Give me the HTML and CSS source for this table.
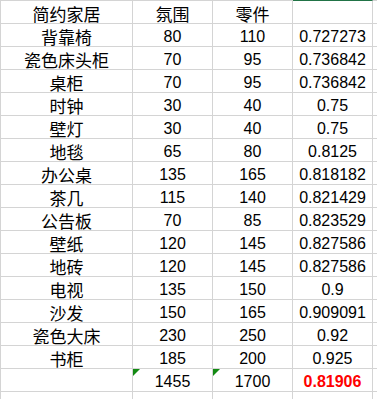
FILE: index.html
```html
<!DOCTYPE html>
<html lang="zh">
<head>
<meta charset="utf-8">
<link rel="stylesheet" href="styles.css">
</head>
<body>
<div class="sheet">
  <div class="c t first">简约家居</div><div class="c t first">氛围</div><div class="c t first">零件</div><div class="c first sel"></div><div class="c first"></div>
  <div class="c t">背靠椅</div><div class="c">80</div><div class="c">110</div><div class="c">0.727273</div><div class="c"></div>
  <div class="c t">瓷色床头柜</div><div class="c">70</div><div class="c">95</div><div class="c">0.736842</div><div class="c"></div>
  <div class="c t">桌柜</div><div class="c">70</div><div class="c">95</div><div class="c">0.736842</div><div class="c"></div>
  <div class="c t">时钟</div><div class="c">30</div><div class="c">40</div><div class="c">0.75</div><div class="c"></div>
  <div class="c t">壁灯</div><div class="c">30</div><div class="c">40</div><div class="c">0.75</div><div class="c"></div>
  <div class="c t">地毯</div><div class="c">65</div><div class="c">80</div><div class="c">0.8125</div><div class="c"></div>
  <div class="c t">办公桌</div><div class="c">135</div><div class="c">165</div><div class="c">0.818182</div><div class="c"></div>
  <div class="c t">茶几</div><div class="c">115</div><div class="c">140</div><div class="c">0.821429</div><div class="c"></div>
  <div class="c t">公告板</div><div class="c">70</div><div class="c">85</div><div class="c">0.823529</div><div class="c"></div>
  <div class="c t">壁纸</div><div class="c">120</div><div class="c">145</div><div class="c">0.827586</div><div class="c"></div>
  <div class="c t">地砖</div><div class="c">120</div><div class="c">145</div><div class="c">0.827586</div><div class="c"></div>
  <div class="c t">电视</div><div class="c">135</div><div class="c">150</div><div class="c">0.9</div><div class="c"></div>
  <div class="c t">沙发</div><div class="c">150</div><div class="c">165</div><div class="c">0.909091</div><div class="c"></div>
  <div class="c t">瓷色大床</div><div class="c">230</div><div class="c">250</div><div class="c">0.92</div><div class="c"></div>
  <div class="c t">书柜</div><div class="c">185</div><div class="c">200</div><div class="c">0.925</div><div class="c"></div>
  <div class="c t"></div><div class="c warn">1455</div><div class="c warn">1700</div><div class="c total">0.81906</div><div class="c"></div>
  <div class="c"></div><div class="c"></div><div class="c"></div><div class="c"></div><div class="c"></div>
</div>
</body>
</html>
```

FILE: styles.css
```css
html, body {
  margin: 0;
  padding: 0;
  background: #ffffff;
}
body {
  width: 377px;
  height: 399px;
  overflow: hidden;
}
.sheet {
  display: grid;
  grid-template-columns: 132px 80px 80px 80px 4px;
  grid-template-rows: 24px;
  grid-auto-rows: 23px;
  border-left: 1px solid #d4d4d4;
  font-family: "Liberation Sans", "Noto Sans CJK SC", sans-serif;
  font-size: 16px;
  line-height: 18px;
  color: #000000;
}
.c {
  position: relative;
  box-sizing: border-box;
  border-right: 1px solid #d4d4d4;
  border-bottom: 1px solid #d4d4d4;
  display: flex;
  align-items: flex-end;
  justify-content: center;
  white-space: nowrap;
}
.c:nth-child(5n) {
  border-right: none;
}
.first {
  border-top: 1px solid #d4d4d4;
}
.sel {
  border-top-color: #217346;
}
.t {
  font-family: "Noto Sans CJK SC", sans-serif;
  font-size: 17px;
  line-height: 18px;
}
.total {
  color: #ff0000;
  font-weight: bold;
}
.warn::before {
  content: "";
  position: absolute;
  top: 0;
  left: 0;
  width: 0;
  height: 0;
  border-top: 7px solid #138a13;
  border-right: 7px solid transparent;
}
```
